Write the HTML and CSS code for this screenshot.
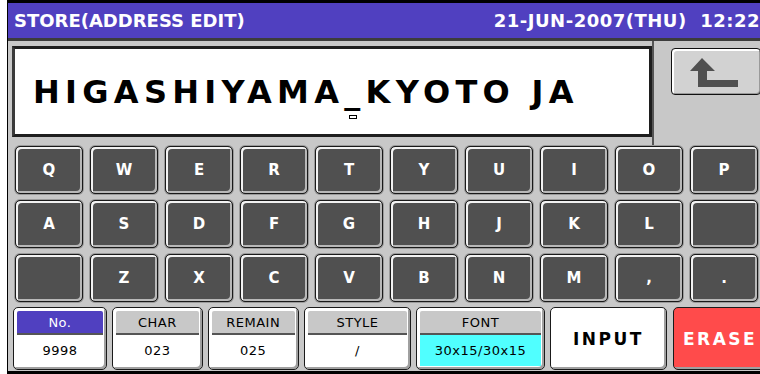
FILE: index.html
```html
<!DOCTYPE html>
<html lang="en">
<head>
    <meta charset="UTF-8" />
    <title>Store Address Edit</title>
    <link rel="stylesheet" href="styles.css">
</head>
<body>

<div class="screen">

    <!-- Barra de título -->
    <div class="title">
        <span>STORE(ADDRESS EDIT)</span>
        <span class="date">21-JUN-2007(THU)&nbsp; 12:22</span>
    </div>

    <!-- Campo de texto + voltar -->
    <div class="entry">
        <div class="textbox">
            <span class="text">HIGASHIYAMA_KYOTO JA</span>
            <span class="cursor"></span>
        </div>
        <div class="side">
            <button class="back">
                <svg width="85" height="46" viewBox="0 0 85 46">
                    <path d="M30 9 L43 22 L35 22 L35 31 L66 31 L66 38 L26 38 L26 22 L18 22 Z" fill="#505050"/>
                </svg>
            </button>
        </div>
    </div>

    <!-- Teclado -->
    <div class="keys">
        <div class="key">Q</div><div class="key">W</div><div class="key">E</div><div class="key">R</div><div class="key">T</div>
        <div class="key">Y</div><div class="key">U</div><div class="key">I</div><div class="key">O</div><div class="key">P</div>
        <div class="key">A</div><div class="key">S</div><div class="key">D</div><div class="key">F</div><div class="key">G</div>
        <div class="key">H</div><div class="key">J</div><div class="key">K</div><div class="key">L</div><div class="key"></div>
        <div class="key"></div><div class="key">Z</div><div class="key">X</div><div class="key">C</div><div class="key">V</div>
        <div class="key">B</div><div class="key">N</div><div class="key">M</div><div class="key">,</div><div class="key">.</div>
    </div>

    <!-- Linha de status -->
    <div class="status">
        <div class="field w-no">
            <div class="label label-active">No.</div>
            <div class="value">9998</div>
        </div>
        <div class="field w-char">
            <div class="label">CHAR</div>
            <div class="value">023</div>
        </div>
        <div class="field w-remain">
            <div class="label">REMAIN</div>
            <div class="value">025</div>
        </div>
        <div class="field w-style">
            <div class="label">STYLE</div>
            <div class="value">/</div>
        </div>
        <div class="field w-font">
            <div class="label">FONT</div>
            <div class="value value-font">30x15/30x15</div>
        </div>
        <button class="action input">INPUT</button>
        <button class="action erase">ERASE</button>
    </div>

</div>

</body>
</html>
```

FILE: styles.css
```css
* {
    box-sizing: border-box;
}

body {
    margin: 0;
    background: #fff;
    overflow: hidden;
    font-family: 'DejaVu Sans', sans-serif;
}

.screen {
    margin-left: 7px;
    width: 760px;
    height: 374px;
    border-left: 1px solid #000;
    border-top: 3px solid #000;
    border-bottom: 3px solid #000;
    background: #c8c8c8;
    overflow: hidden;
}

/* Título */
.title {
    height: 38px;
    background: #5040c0;
    border-bottom: 3px solid #3c3c3c;
    color: #fff;
    font-weight: bold;
    font-size: 18px;
    display: flex;
    justify-content: space-between;
    align-items: center;
    padding: 0 7px 0 6px;
}

.date {
    letter-spacing: 0.5px;
}

/* Campo de entrada */
.entry {
    display: flex;
    height: 105px;
}

.textbox {
    position: relative;
    margin: 5px 0 0 4px;
    width: 640px;
    height: 91px;
    background: #fff;
    border: 3px solid #1e1e1e;
    border-left-color: #3a3a3a;
    padding: 24px 0 0 18px;
}

.text {
    font-weight: bold;
    font-size: 32px;
    letter-spacing: 5.3px;
    color: #000;
}

.cursor {
    position: absolute;
    left: 334px;
    top: 66px;
    width: 8px;
    height: 4px;
    border: 1px solid #000;
}

.side {
    flex: 1;
    border-left: 2px solid #555;
    padding: 7px 0 0 17px;
}

.back {
    display: block;
    width: 90px;
    height: 47px;
    padding: 0;
    background: #d2d2d2;
    border: 1px solid #111;
    border-radius: 4px;
    box-shadow: inset 2px 2px 0 #fff, inset -1px -1px 0 #9a9a9a;
}

.back svg {
    display: block;
}

/* Teclado */
.keys {
    display: grid;
    grid-template-columns: repeat(10, 68px);
    grid-auto-rows: 48px;
    column-gap: 7px;
    row-gap: 6px;
    padding-left: 7px;
}

.key {
    background: #505050;
    border: 1px solid #1a1a1a;
    border-radius: 5px;
    box-shadow: inset 2px 2px 0 #f2f2f2, inset -2px -2px 0 #b8b8b8, 0 0 0 1px #9a9a9a;
    color: #fff;
    font-weight: bold;
    font-size: 15px;
    display: flex;
    align-items: center;
    justify-content: center;
}

/* Linha de status */
.status {
    display: flex;
    gap: 5px;
    margin-top: 5px;
    padding-left: 5px;
    height: 63px;
}

.field {
    display: flex;
    flex-direction: column;
    border: 1px solid #1a1a1a;
    border-radius: 5px;
    background: #fff;
    padding: 3px;
    box-shadow: inset 1px 1px 0 #fff, inset -2px -2px 0 #a0a0a0;
    font-size: 13px;
    letter-spacing: 0.5px;
    color: #000;
    text-align: center;
}

.label {
    height: 24px;
    line-height: 24px;
    background: #c8c8c8;
    border-bottom: 2px solid #555;
    border-radius: 2px 2px 0 0;
}

.label-active {
    background: #5040c0;
    color: #fff;
}

.value {
    flex: 1;
    display: flex;
    align-items: center;
    justify-content: center;
}

.value-font {
    background: #50ffff;
}

.w-no { width: 95px; }
.w-char { width: 92px; }
.w-remain { width: 92px; }
.w-style { width: 109px; }
.w-font { width: 130px; }

.action {
    border: 1px solid #1a1a1a;
    border-radius: 5px;
    font-family: 'DejaVu Sans', sans-serif;
    font-weight: bold;
    font-size: 17px;
    letter-spacing: 2.5px;
    padding: 0;
    box-shadow: inset -2px -2px 0 #a0a0a0;
}

.input {
    width: 119px;
    background: #fff;
    color: #000;
}

.erase {
    width: 95px;
    margin-left: 1px;
    background: #ff4b4b;
    color: #fff;
}
```
